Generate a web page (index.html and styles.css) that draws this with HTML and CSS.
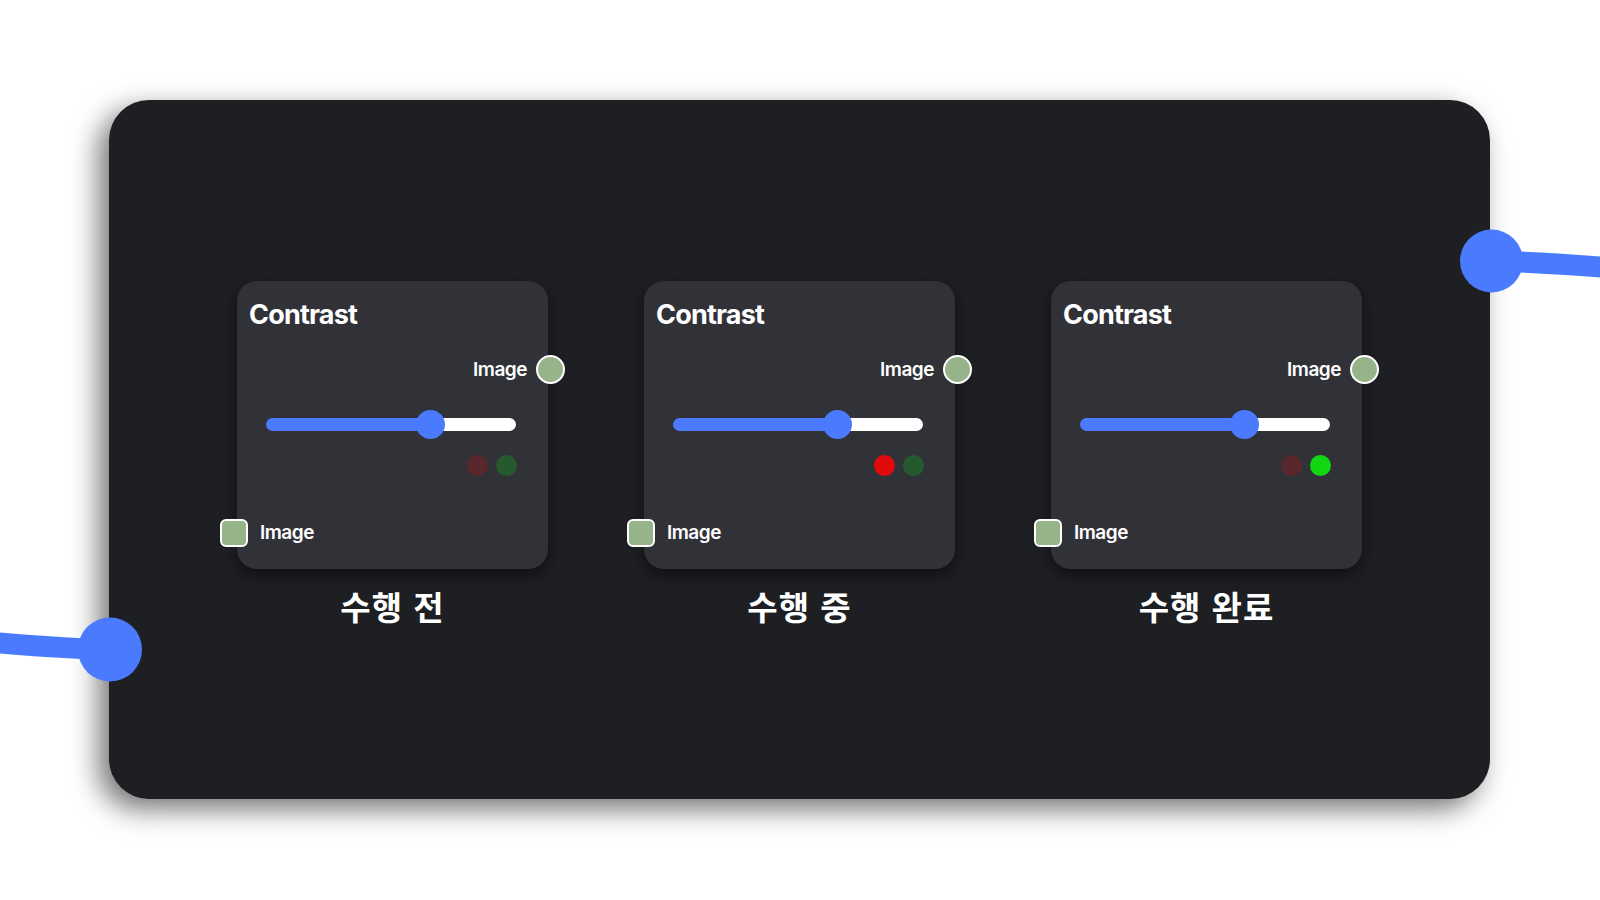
FILE: index.html
```html
<!DOCTYPE html>
<html lang="ko">
<head>
<meta charset="utf-8">
<link rel="stylesheet" href="styles.css">
</head>
<body>
<div class="stage">
  <div class="panel">
    <div class="step">
      <div class="node">
        <div class="title">Contrast</div>
        <div class="out-row"><span class="port-label">Image</span><span class="port-out"></span></div>
        <div class="slider"><div class="fill" style="width:165px"></div><div class="thumb"></div><div class="rest"></div></div>
        <div class="dots"><span class="dot red"></span><span class="dot green"></span></div>
        <div class="in-row"><span class="port-in"></span><span class="port-label">Image</span></div>
      </div>
      <div class="caption">수행 전</div>
    </div>
    <div class="step">
      <div class="node">
        <div class="title">Contrast</div>
        <div class="out-row"><span class="port-label">Image</span><span class="port-out"></span></div>
        <div class="slider"><div class="fill" style="width:165px"></div><div class="thumb"></div><div class="rest"></div></div>
        <div class="dots"><span class="dot red on"></span><span class="dot green"></span></div>
        <div class="in-row"><span class="port-in"></span><span class="port-label">Image</span></div>
      </div>
      <div class="caption">수행 중</div>
    </div>
    <div class="step">
      <div class="node">
        <div class="title">Contrast</div>
        <div class="out-row"><span class="port-label">Image</span><span class="port-out"></span></div>
        <div class="slider"><div class="fill" style="width:165px"></div><div class="thumb"></div><div class="rest"></div></div>
        <div class="dots"><span class="dot red"></span><span class="dot green on"></span></div>
        <div class="in-row"><span class="port-in"></span><span class="port-label">Image</span></div>
      </div>
      <div class="caption">수행 완료</div>
    </div>
  </div>
  <svg class="wires" width="1600" height="900" viewBox="0 0 1600 900">
    <path d="M1491 261 C 1530 262, 1565 264, 1612 268" fill="none" stroke="#4a7bff" stroke-width="21"/>
    <circle cx="1491.5" cy="261" r="31.5" fill="#4a7bff"/>
    <path d="M110 649.5 C 70 649, 35 646, -12 642" fill="none" stroke="#4a7bff" stroke-width="21"/>
    <circle cx="110" cy="649.5" r="32" fill="#4a7bff"/>
  </svg>
</div>
</body>
</html>
```

FILE: styles.css
```css
html, body {
  margin: 0;
  padding: 0;
  background: #ffffff;
}
.stage {
  position: relative;
  width: 1600px;
  height: 900px;
  overflow: hidden;
  padding: 100px 0 0 109px;
  box-sizing: border-box;
  font-family: Inter, "Noto Sans CJK KR", sans-serif;
}
.panel {
  width: 1381px;
  height: 699px;
  background: #1e1f23;
  border-radius: 40px;
  box-shadow: -10px 10px 28px rgba(0, 0, 0, 0.55);
  display: flex;
  justify-content: center;
  align-items: flex-start;
  gap: 96px;
  padding-top: 181px;
  box-sizing: border-box;
}
.step {
  width: 311px;
  display: flex;
  flex-direction: column;
  align-items: center;
}
.node {
  width: 311px;
  height: 288px;
  box-sizing: border-box;
  background: #313238;
  border-radius: 20px;
  box-shadow: 0 6px 16px rgba(0, 0, 0, 0.5);
  display: flex;
  flex-direction: column;
  padding-top: 18px;
  color: #ffffff;
}
.title {
  margin-left: 12px;
  font-size: 27px;
  line-height: 32px;
  font-weight: 700;
  letter-spacing: -0.8px;
}
.out-row {
  margin-top: 24px;
  height: 29px;
  display: flex;
  align-items: center;
  justify-content: flex-end;
  margin-right: -17px;
  gap: 9px;
}
.port-label {
  font-size: 19px;
  font-weight: 600;
  line-height: 24px;
  letter-spacing: -0.5px;
}
.port-out {
  width: 25px;
  height: 25px;
  border-radius: 50%;
  background: #97b38a;
  border: 2px solid #ffffff;
}
.slider {
  position: relative;
  margin: 26px 32px 0 29px;
  height: 29px;
  display: flex;
  align-items: center;
}
.fill {
  height: 13px;
  background: #4a7bff;
  border-radius: 7px 0 0 7px;
  flex: none;
}
.rest {
  flex: 1;
  height: 13px;
  background: #ffffff;
  border-radius: 0 7px 7px 0;
}
.thumb {
  width: 29px;
  height: 29px;
  border-radius: 50%;
  background: #4a7bff;
  margin-left: -15px;
  margin-right: -14px;
  position: relative;
  z-index: 1;
  flex: none;
}
.dots {
  margin-top: 16px;
  margin-right: 31px;
  display: flex;
  justify-content: flex-end;
  gap: 8px;
}
.dot {
  width: 21px;
  height: 21px;
  border-radius: 50%;
}
.dot.red { background: #5a272c; }
.dot.green { background: #245a2e; }
.dot.red.on { background: #e10b0b; }
.dot.green.on { background: #12d612; }
.in-row {
  margin-top: 43px;
  margin-left: -17px;
  height: 28px;
  display: flex;
  align-items: center;
  gap: 12px;
}
.port-in {
  width: 24px;
  height: 24px;
  border-radius: 6px;
  background: #97b38a;
  border: 2px solid #ffffff;
}
.caption {
  margin-top: 17px;
  font-family: "Noto Sans CJK KR", sans-serif;
  font-size: 33px;
  line-height: 40px;
  font-weight: 700;
  color: #ffffff;
  letter-spacing: 1px;
}
.wires {
  position: absolute;
  left: 0;
  top: 0;
  pointer-events: none;
}
```
